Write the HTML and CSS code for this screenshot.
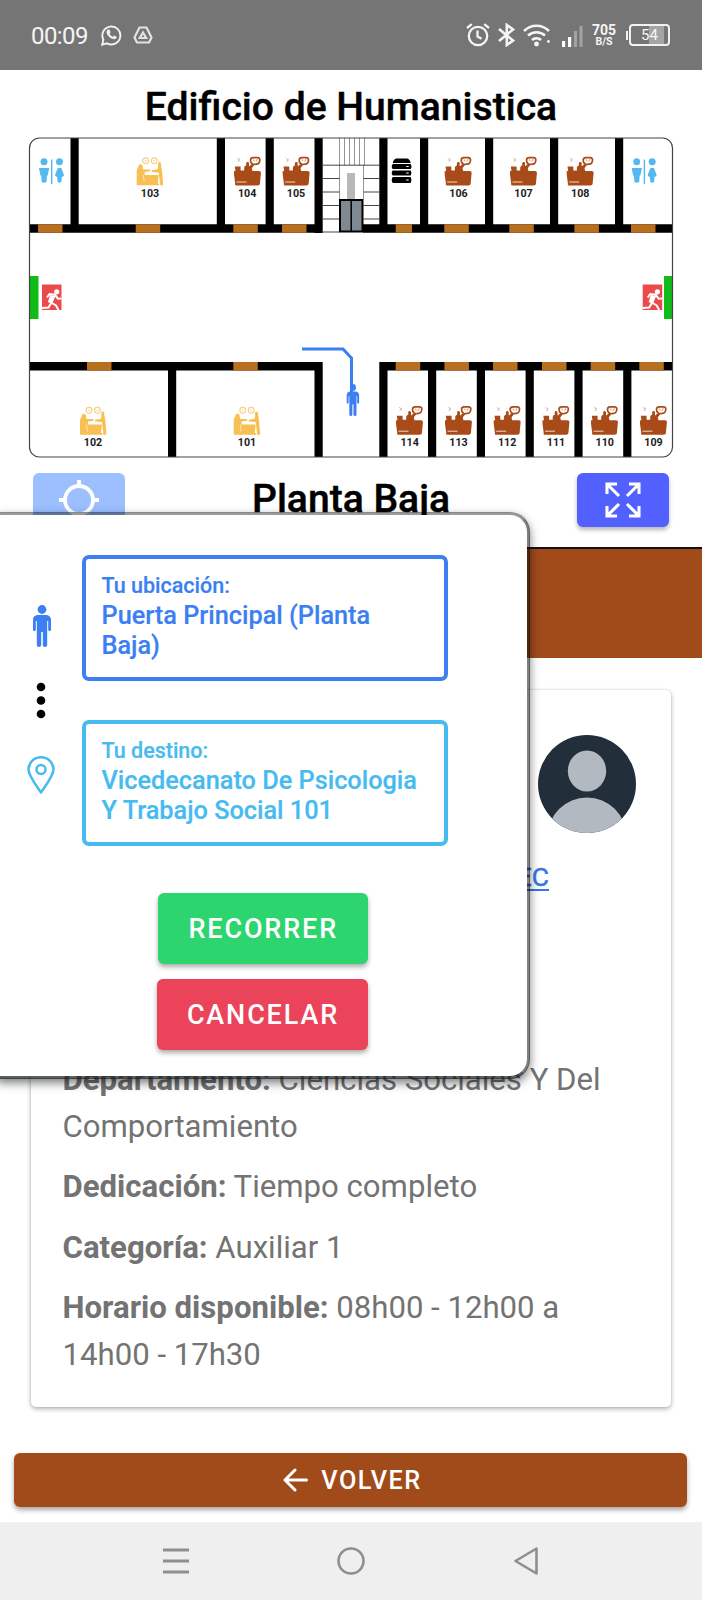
FILE: index.html
```html
<!DOCTYPE html>
<html lang="es">
<head>
<meta charset="utf-8">
<title>Edificio de Humanistica</title>
<link rel="stylesheet" href="styles.css">
</head>
<body>
<svg width="0" height="0" class="defs">
  <defs>
    <g id="desk">
      <path fill="#a84b18" d="M.8 10h5.800v4h3.600v-3c.4-1.300 1.200-1.800 2-2V7c0-1.200.8-1.800 1.800-1.500 1 .3 1.200 1 1 2v2l2.500 1.500 1 3.500h6.500c1.500.2 2 1 1.900 2L26 26.500c-.2 1.800-.8 2.500-2.500 2.500H2c-.8 0-1-.8-.8-2L0 18v-3.500h1.500z"/>
      <path fill="none" stroke="#a84b18" stroke-width="1.700" d="M14.500 12l4-4.500c-1.500-1-2.200-2.200-2-4 .2-1.700 1-2.300 2.500-2.300h4.500c1.700 0 2.400.8 2.300 2.400-.2 2.700-1.200 4-3.200 4l-3 .4-4 5"/>
      <path fill="none" stroke="#dca98d" stroke-width="1.200" d="M19 3l1.500 1.500M23.500 2.500L22 5"/>
      <path fill="none" stroke="#dcbfb0" stroke-width="1" d="M3 1.500l2.500 2-2 1.500M5.500 2l-.5 3"/>
      <path stroke="#f0d8cb" stroke-width="1" d="M2.500 25.500h10"/>
    </g>
    <g id="meeting">
      <circle cx="9" cy="4.300" r="2.900" fill="none" stroke="#f8cf85" stroke-width="1.100"/>
      <circle cx="17.500" cy="4.300" r="2.900" fill="none" stroke="#f8cf85" stroke-width="1.100"/>
      <path fill="none" stroke="#f8cf85" d="M8 4.300h2M16.500 4.300h2"/>
      <path fill="#f8c053" d="M1.500 11c0-2 .8-3.200 2.600-3.200 1 0 1.700.8 1.800 2.200L6.500 13h7v1.800L8 15.500V18.500h14l-1 8.500h1.500v1.800H0V15.500c0-2 .3-3 1.500-4.500z"/>
      <path fill="#f8c053" d="M21.500 9c-.5-2 0-3.500 1.200-3.500s2 1.500 1.600 3.500l1 5L26.500 28.800H23.500L22 16l-7-.5v-1.700l6-1z"/>
      <path stroke="#fff" stroke-width=".6" d="M6.500 18.500l1 7"/>
    </g>
    <g id="wc" fill="#53b9f0">
      <circle cx="5" cy="4.700" r="3.500"/><path d="M0 11h10.200L8.700 18.500H8l-.5 6.500q-2.400 1.500-4.800 0L2.200 18.500h-.8z"/>
      <path d="M12 2.500h1.400V27H12z"/>
      <circle cx="20.500" cy="4.700" r="3.500"/><path d="M18.700 11h3.600l2.500 6.500v1.500l-2 1-.4 5q-1.900 1.500-3.800 0l-.4-5-2-1v-1.500z"/>
    </g>
    <g id="exit">
      <path fill="#eb4a4d" d="M0 0h19.500v25.500H0z"/>
      <circle cx="14.700" cy="7.300" r="2.600" fill="#fff"/>
      <path fill="none" stroke="#fff" stroke-width="2" d="M5 13l2.500-3.500 5.500.8 3 4 3.500-.4M0 23.500l6.500-.5 3-5M8 17.500l6 3.500 2.500 4.500"/>
      <path fill="#fff" d="M8 10.500l5.500 1-3.500 8-4-2z"/>
    </g>
    <g id="person">
      <circle cx="9" cy="4.500" r="4.400"/>
      <path d="M5.500 10h7c3.300 0 5.500 1.800 5.500 5v9.500c0 2-2.800 2-2.800 0V16h-1v24c0 2.600-4.400 2.600-4.400 0V27H8.200v13c0 2.600-4.400 2.600-4.400 0V16h-1v8.500c0 2-2.800 2-2.800 0V15c0-3.200 2.200-5 5.500-5z"/>
    </g>
  </defs>
</svg>
<div class="screen">
  <header class="status">
    <span class="clock">00:09</span>
    <svg class="whatsapp" width="21" height="22" viewBox="0 0 21 22"><path d="M1.200 20.700l1.200-5a9 9 0 1 1 3.500 3.600z" fill="none" stroke="#f2f2f2" stroke-width="1.900"/><path fill="#f2f2f2" d="M7 5.500l1.500.1 1.100 2.700-1 1.400c.8 1.400 1.800 2.400 3.300 3.100l1.300-1.200 2.500 1.200c0 1.800-1.500 2.600-2.900 2.500-3.800-.7-7-4-7.200-7 0-1.200.5-2.300 1.400-2.800z"/></svg>
    <svg class="drive" width="20" height="18" viewBox="0 0 20 18"><path d="M6.500 1.500h7L18.500 11.500 16 16.500H4L1.500 11.500z" fill="none" stroke="#e2e2e2" stroke-width="2.200" stroke-linejoin="round"/><path d="M10 6.500l3.200 5.500H6.800z" fill="none" stroke="#e2e2e2" stroke-width="2.200"/></svg>
    <span class="grow"></span>
    <svg class="alarm" width="24" height="24" viewBox="0 0 24 24" fill="none" stroke="#f5f5f5" stroke-width="2.300"><circle cx="12" cy="13" r="9.200"/><path d="M11.500 7.500v6l4 2.300M1 5l4.800-3.800M23 5l-4.800-3.800"/></svg>
    <svg class="bluetooth" width="17" height="24" viewBox="0 0 17 24" fill="none" stroke="#f5f5f5" stroke-width="2.600"><path d="M1 6l14 11.500L8.800 22V2L15 6.500 1 18"/></svg>
    <svg class="wifi" width="28" height="23" viewBox="0 0 28 23" fill="none" stroke="#f5f5f5" stroke-width="2.500"><path d="M1 7c7-7 18-7 25 0M5 11.500c5-4.500 12-4.500 17 0M9 16c2.500-2.500 6.500-2.500 9 0"/><circle cx="13.500" cy="20" r="1.200" fill="#f5f5f5"/><circle cx="25.500" cy="17.500" r="1.400" fill="#f5f5f5" stroke="none"/></svg>
    <svg class="signal" width="21" height="22" viewBox="0 0 21 22"><path fill="#fff" d="M0 16h3.200v6H0zM6 12h3.200v10H6z"/><path fill="#a3a3a3" d="M12 6h3v16h-3zM17.500 1h3v21h-3z"/></svg>
    <span class="rate"><b>705</b><b class="unit">B/S</b></span>
    <span class="battery"><i></i><span>54</span></span>
  </header>

  <main class="page">
    <h1 class="title">Edificio de Humanistica</h1>
    <svg class="map" width="646" height="322" viewBox="28 137 646 322">
      <clipPath id="frame"><rect x="29.500" y="138" width="643" height="319" rx="10"/></clipPath>
      <g clip-path="url(#frame)">
        <path d="M70.500 138h8.200v90h-8.200zM216.800 138h8.200v90h-8.200zM265.600 138h8.200v90h-8.200zM314.500 138h8.200v95h-8.200zM379.300 138h8.200v90h-8.200zM420 138h8.200v90h-8.200zM485 138h8.200v90h-8.200zM550 138h8.200v90h-8.200zM615 138h8.200v90h-8.200zM29 224.300h293.700v8.500H29zM363 224.300h310v8.500H363z"/>
        <path d="M29 362h293.700v8.500H29zM379.300 362H673v8.500H379.300zM168 362h8.200v97H168zM314.500 362h8.200v97h-8.200zM379.300 362h8.200v97h-8.200zM428 362h8.200v97H428zM476.800 362h8.200v97h-8.200zM525.600 362h8.200v97h-8.200zM574.400 362h8.200v97h-8.200zM623.200 362h8.200v97h-8.200z"/>
        <path fill="#b87020" d="M38 224.300h24.500v8.500H38zM135.700 224.300h24.500v8.500h-24.500zM233.300 224.300h24.500v8.500h-24.500zM282 224.300h24.500v8.500H282zM395.700 224.300H412v8.500h-16.300zM444.300 224.300h24.500v8.500h-24.500zM509.300 224.300h24.500v8.500h-24.500zM574.400 224.300h24.500v8.500h-24.500zM631 224.300h24.500v8.500H631zM87 362h24.500v8.500H87zM233.300 362h24.500v8.500h-24.500zM395.700 362h24.500v8.500h-24.500zM444.400 362h24.500v8.500h-24.500zM493 362h24.500v8.500H493zM542 362h24.500v8.500H542zM590.700 362h24.500v8.500h-24.500zM639.300 362h24.500v8.500h-24.500z"/>
        <path fill="#10bd18" d="M29 276h9.500v43H29zM664 276h9v43h-9z"/>
        <path fill="none" stroke="#888" stroke-width=".9" d="M339.500 138v27M344.500 138v27M349.500 138v27M354.500 138v27M359.500 138v27M364.500 138v27M339.500 165v34M363.500 165v34"/>
        <path fill="none" stroke="#444" stroke-width="1" d="M322.500 165.200h57M322.500 178.500h17M363.500 178.500h16M322.500 192h17M363.500 192h16M322.500 205.500h17M363.500 205.500h16M322.500 219h17M363.500 219h16M322.500 232h17"/>
        <path fill="#b8b8b8" d="M347 173h8v27h-8z"/>
        <path fill="#7f8992" stroke="#000" stroke-width="2" d="M340 200h22.500v31.500H340z"/><path stroke="#000" stroke-width="1.500" d="M351.200 199v33"/>
      </g>
      <rect x="29.500" y="138" width="643" height="319" rx="10" fill="none" stroke="#444" stroke-width="1.200"/>
      <use href="#wc" x="39" y="157"/><use href="#wc" x="631.700" y="157"/>
      <use href="#exit" x="42" y="284.500"/><use href="#exit" x="642.700" y="284.500"/>
      <use href="#meeting" x="136.700" y="156.500"/><use href="#meeting" x="80" y="406"/><use href="#meeting" x="233.700" y="406"/>
      <use href="#desk" x="234" y="156.500"/><use href="#desk" x="282.700" y="156.500"/><use href="#desk" x="444.700" y="156.500"/><use href="#desk" x="510" y="156.500"/><use href="#desk" x="566.700" y="156.500"/>
      <use href="#desk" x="396" y="405.700"/><use href="#desk" x="445" y="405.700"/><use href="#desk" x="493.700" y="405.700"/><use href="#desk" x="542.500" y="405.700"/><use href="#desk" x="591" y="405.700"/><use href="#desk" x="640" y="405.700"/>
      <g transform="translate(391.700 158.500)"><path d="M5 0h10q3 0 4 4.500H1Q2 0 5 0zM1 5.500h18q1.500 2.500 0 5H1q-2-2.500 0-5zM1 12h18q1.500 2.500 0 5H1q-2-2.500 0-5zM1 18.500h18q1.500 3 0 6H1q-2-3 0-6z"/><path stroke="#fff" stroke-width="1.200" d="M14.500 8h2.500M14.500 14.500h2.500M14.500 21.500h2.500"/></g>
      <g class="room">
        <text x="150" y="196.800">103</text><text x="247.200" y="196.800">104</text><text x="296" y="196.800">105</text><text x="458.500" y="196.800">106</text><text x="523.500" y="196.800">107</text><text x="580.300" y="196.800">108</text>
        <text x="93" y="446.200">102</text><text x="247" y="446.200">101</text><text x="409.700" y="446.200">114</text><text x="458.500" y="446.200">113</text><text x="507.200" y="446.200">112</text><text x="556" y="446.200">111</text><text x="604.800" y="446.200">110</text><text x="653.500" y="446.200">109</text>
      </g>
      <path fill="none" stroke="#3b7ff2" stroke-width="3" d="M302 349h41l8.500 9v34"/>
      <use href="#person" fill="#3b7ff2" transform="translate(346.700 384) scale(.69 .76)"/>
    </svg>
    <div class="floor">
      <span class="fab locate"><svg width="40" height="40" viewBox="0 0 40 40" fill="none" stroke="#fff" stroke-width="3.800"><circle cx="20" cy="20" r="14"/><path d="M20 0v7M20 33v7M0 20h7M33 20h7"/></svg></span>
      <h2 class="title">Planta Baja</h2>
      <span class="fab expand"><svg width="36" height="36" viewBox="0 0 36 36" fill="none" stroke="#fff" stroke-width="3.100"><path d="M2 12V2h10M2 2l12 12M24 2h10v10M34 2L22 14M2 24v10h10M2 34l12-12M34 24v10H24M34 34L22 22"/></svg></span>
    </div>
    <div class="band"></div>
    <section class="card">
      <svg class="avatar" width="98" height="98" viewBox="0 0 98 98"><clipPath id="round"><circle cx="49" cy="49" r="49"/></clipPath><g clip-path="url(#round)"><path fill="#222e39" d="M0 0h98v98H0z"/><ellipse cx="49" cy="36" rx="19.200" ry="20.500" fill="#b2b9c0"/><circle cx="49" cy="102" r="39.500" fill="#b2b9c0"/></g></svg>
      <a class="link">EC</a>
      <div class="info">
        <p><b>Departamento:</b> Ciencias Sociales Y Del Comportamiento</p>
        <p><b>Dedicación:</b> Tiempo completo</p>
        <p><b>Categoría:</b> Auxiliar 1</p>
        <p><b>Horario disponible:</b> 08h00 - 12h00 a 14h00 - 17h30</p>
      </div>
    </section>
    <div class="back"><svg width="25" height="24" viewBox="0 0 25 24" fill="none" stroke="#fff" stroke-width="3" stroke-linecap="round" stroke-linejoin="round"><path d="M12 2L2 12l10 10M2 12h21.500"/></svg><span>VOLVER</span></div>
  </main>

  <aside class="dialog">
    <div class="route">
      <div class="marks">
        <svg class="who" width="18" height="43" viewBox="0 0 18 43" fill="#3b7ff2"><use href="#person"/></svg>
        <svg class="dots" width="10" height="37" viewBox="0 0 10 37"><circle cx="5" cy="5" r="4.300"/><circle cx="5" cy="18.500" r="4.300"/><circle cx="5" cy="32" r="4.300"/></svg>
        <svg class="pin" width="28" height="38" viewBox="0 0 28 38" fill="none" stroke="#46bbf0" stroke-width="2.500" stroke-linejoin="round"><path d="M14 36.500C10.500 31 1.500 20 1.500 13.500a12.500 12.300 0 0 1 25 0C26.500 20 17.500 31 14 36.500z"/><circle cx="14" cy="13.500" r="4.500"/></svg>
      </div>
      <div class="places">
        <div class="place from"><small>Tu ubicación:</small><p>Puerta Principal (Planta Baja)</p></div>
        <div class="place to"><small>Tu destino:</small><p>Vicedecanato De Psicologia Y Trabajo Social 101</p></div>
      </div>
    </div>
    <div class="actions"><span class="btn go">RECORRER</span><span class="btn cancel">CANCELAR</span></div>
  </aside>

  <footer class="nav">
    <svg width="26" height="28" viewBox="0 0 26 28"><path fill="none" stroke="#8f8f8f" stroke-width="3" d="M0 3h26M0 14h26M0 25h26"/></svg>
    <svg width="28" height="28" viewBox="0 0 28 28"><circle cx="14" cy="14" r="12.500" fill="none" stroke="#8f8f8f" stroke-width="2.600"/></svg>
    <svg width="26" height="30" viewBox="0 0 26 30"><path d="M23.500 2.500v25L2.500 15z" fill="none" stroke="#8f8f8f" stroke-width="2.600" stroke-linejoin="round"/></svg>
  </footer>
</div>
</body>
</html>
```
FILE: styles.css
```css
* { box-sizing: border-box; }
body { margin: 0; background: #fff; font-family: Roboto, "Liberation Sans", sans-serif; }
h1, h2, p { margin: 0; }
svg { display: block; flex: none; }
.defs { position: absolute; }
.screen { position: relative; width: 702px; height: 1600px; overflow: hidden; display: flex; flex-direction: column; background: #fff; }

.status { height: 70px; flex: none; background: #757575; color: #f5f5f5; display: flex; align-items: center; padding: 0 32px 0 31px; }
.clock { font-size: 24px; letter-spacing: -.6px; line-height: 28px; width: 57px; padding-top: 1px; white-space: nowrap; }
.whatsapp { margin-left: 13px; }
.drive { margin-left: 11px; }
.grow { flex: 1; }
.bluetooth { margin-left: 8px; }
.wifi { margin-left: 8px; }
.signal { margin-left: 11px; margin-top: 2px; }
.rate { width: 24px; margin-left: 9px; display: flex; flex-direction: column; align-items: center; font-size: 14px; line-height: 12px; }
.rate .unit { font-size: 10.500px; line-height: 11px; }
.battery { position: relative; width: 41px; height: 22px; margin-left: 13px; border: 2px solid #f2f2f2; border-radius: 4px; font-size: 15px; line-height: 18px; text-align: center; background: linear-gradient(90deg, transparent 48%, #a5a5a5 48%, #a5a5a5 90%, transparent 90%); }
.battery i { position: absolute; left: -5px; top: 5px; width: 2px; height: 9px; background: #f2f2f2; }

.page { flex: 1; display: flex; flex-direction: column; min-height: 0; }
.title { font-size: 39.100px; font-weight: 500; line-height: 46px; color: #000; -webkit-text-stroke: .45px #000; text-align: center; white-space: nowrap; }
h1.title { margin-top: 14px; height: 53px; }
.map { margin-left: 28px; }
.room { font: bold 10.700px Roboto, sans-serif; text-anchor: middle; fill: #222; }
.floor { display: flex; justify-content: space-between; align-items: flex-start; padding: 14px 33px 0; height: 88px; }
.floor .title { margin-top: 3px; }
.fab { width: 92px; height: 54px; border-radius: 6px; display: flex; align-items: center; justify-content: center; box-shadow: 0 3px 4px rgba(0,0,0,.28); }
.locate { background: #9bbfff; box-shadow: none; }
.expand { background: #5260ff; }
.band { height: 111px; flex: none; background: #a14b1b; border-top: 2px solid #111; }
.card { margin: 32px 31px 0 31px; height: 717px; flex: none; border-radius: 5px; background: #fff; box-shadow: 0 2px 5px rgba(0,0,0,.3), 0 0 2px rgba(0,0,0,.15); padding: 45px 35px 0 31.500px; display: flex; flex-direction: column; }
.avatar { align-self: flex-end; }
.link { align-self: flex-end; margin: 28px 87px 0 0; font-size: 26.500px; line-height: 32px; color: #3775eb; -webkit-text-stroke: .4px #3775eb; text-decoration: underline; text-decoration-thickness: 2px; text-underline-offset: 3px; }
.info { margin-top: 162.500px; font-size: 31.150px; line-height: 47px; color: #737373; }
.info p { margin-bottom: 13.500px; }
.back { margin: 46px 15px 0 14px; height: 54px; flex: none; border-radius: 6px; background: #a14b1b; color: #fff; display: flex; align-items: center; justify-content: center; gap: 13px; padding-left: 4px; font-size: 25.300px; font-weight: 500; letter-spacing: 1.500px; box-shadow: 0 3px 5px rgba(0,0,0,.35); }

.dialog { position: absolute; left: -3px; top: 512px; width: 533px; height: 567px; background: #fff padding-box; border: 3px solid; border-color: rgba(0,0,0,.4) rgba(0,0,0,.5) rgba(25,35,40,.72) transparent; border-radius: 0 20px 20px 0; box-shadow: 0 4px 10px rgba(0,0,0,.5); padding: 40px 0 0 0; }
.route { display: flex; }
.marks { width: 82px; flex: none; display: flex; flex-direction: column; align-items: center; }
.who { margin: 50px 0 0 1px; }
.dots { margin-top: 34px; }
.pin { margin-top: 37px; }
.places { display: flex; flex-direction: column; gap: 39px; }
.place { width: 365.500px; height: 126px; border: 4px solid; border-radius: 7px; padding: 13px 15.500px 0; font-weight: 500; }
.place small { display: block; font-size: 21.500px; line-height: 28.500px; -webkit-text-stroke: .2px; }
.place p { font-size: 25.300px; line-height: 30.500px; -webkit-text-stroke: .2px; }
.from { color: #3b7ff2; }
.to { color: #46bbf0; }
.actions { display: flex; flex-direction: column; align-items: flex-end; gap: 15px; margin: 47px 159px 0 0; }
.btn { height: 71px; border-radius: 6px; color: #fff; font-size: 27px; font-weight: 500; letter-spacing: 1.850px; line-height: 72px; padding: 0 29px 0 30px; box-shadow: 0 3px 5px rgba(0,0,0,.33); }
.go { background: #2dd56f; padding-right: 30px; }
.cancel { background: #eb445a; }

.nav { height: 78px; flex: none; background: #efefef; display: flex; justify-content: space-between; align-items: center; padding: 0 163px 0 163px; }
```
